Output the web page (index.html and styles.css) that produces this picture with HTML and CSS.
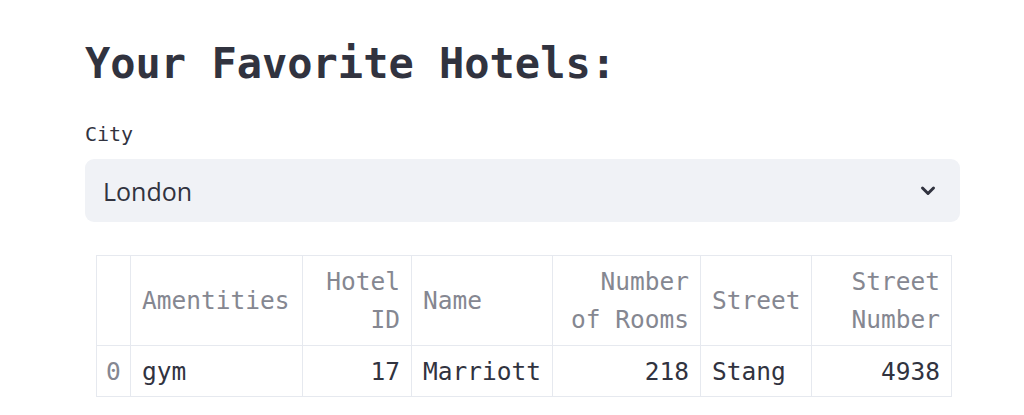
FILE: index.html
```html
<!DOCTYPE html>
<html>
<head>
<meta charset="utf-8">
<link rel="stylesheet" href="styles.css">
</head>
<body>
<main class="page">
  <h1 class="title">Your Favorite Hotels:</h1>
  <div class="field">
    <label class="label">City</label>
    <div class="select">
      <span class="select-value">London</span>
      <svg class="chevron" width="16" height="12" viewBox="0 0 16 12"><polyline points="2.5,3 8,8.5 13.5,3" fill="none" stroke="#31333f" stroke-width="3" stroke-linecap="round" stroke-linejoin="round"/></svg>
    </div>
  </div>
  <table class="grid">
    <colgroup>
      <col class="c-idx"><col class="c-am"><col class="c-id"><col class="c-name"><col class="c-rooms"><col class="c-street"><col class="c-num">
    </colgroup>
    <thead>
      <tr>
        <th></th>
        <th class="l">Amentities</th>
        <th class="r">Hotel<br>ID</th>
        <th class="l">Name</th>
        <th class="r">Number<br>of Rooms</th>
        <th class="l">Street</th>
        <th class="r">Street<br>Number</th>
      </tr>
    </thead>
    <tbody>
      <tr>
        <td class="idx">0</td>
        <td class="l">gym</td>
        <td class="r">17</td>
        <td class="l">Marriott</td>
        <td class="r">218</td>
        <td class="l">Stang</td>
        <td class="r">4938</td>
      </tr>
    </tbody>
  </table>
</main>
</body>
</html>
```
FILE: styles.css
```css
html, body {
  margin: 0;
  padding: 0;
  background: #ffffff;
}
.page {
  padding: 39px 64px 0 85px;
  font-family: "DejaVu Sans Mono", "Liberation Mono", monospace;
  color: #31333f;
}
.title {
  margin: 0;
  font-size: 42px;
  line-height: 50px;
  font-weight: bold;
  letter-spacing: 0;
}
.field {
  margin-top: 33px;
}
.label {
  display: block;
  font-size: 20px;
  line-height: 24px;
  margin-bottom: 13px;
}
.select {
  display: flex;
  align-items: center;
  justify-content: space-between;
  height: 63px;
  background: #f0f2f6;
  border-radius: 9px;
  padding: 0 24px 0 18px;
  box-sizing: border-box;
}
.select-value {
  font-family: "Open Sans", "Noto Sans", sans-serif;
  font-size: 25px;
  color: #31333f;
}
.chevron {
  display: block;
}
.grid {
  margin: 33px 0 0 11px;
  border-collapse: collapse;
  table-layout: fixed;
  width: 855px;
  font-size: 24.5px;
}
.c-idx { width: 34px; }
.c-am { width: 172px; }
.c-id { width: 109px; }
.c-name { width: 141px; }
.c-rooms { width: 148px; }
.c-street { width: 111px; }
.c-num { width: 140px; }
.grid th, .grid td {
  border: 1px solid #e6e9ef;
  padding: 0 11px;
  white-space: nowrap;
}
.grid th {
  height: 89px;
  line-height: 38px;
  font-weight: normal;
  color: #858791;
}
.grid td {
  height: 50px;
  color: #31333f;
}
.grid .l { text-align: left; }
.grid .r { text-align: right; }
.grid .idx {
  text-align: center;
  color: #858791;
  padding: 0;
}
```
